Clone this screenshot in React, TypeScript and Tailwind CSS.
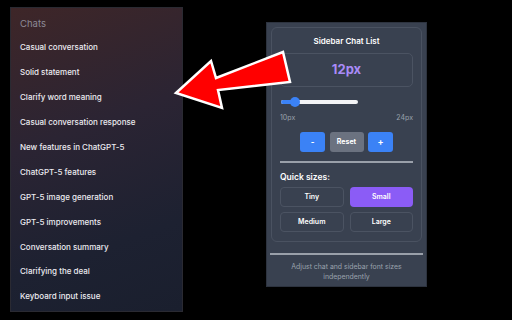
import React from "react";

const chats = [
  "Casual conversation",
  "Solid statement",
  "Clarify word meaning",
  "Casual conversation response",
  "New features in ChatGPT-5",
  "ChatGPT-5 features",
  "GPT-5 image generation",
  "GPT-5 improvements",
  "Conversation summary",
  "Clarifying the deal",
  "Keyboard input issue",
];

export default function App() {
  return (
    <div
      className="relative w-[512px] h-[320px] bg-black overflow-hidden flex items-start"
      style={{ fontFamily: "Inter, 'Liberation Sans', sans-serif" }}
    >
      {/* Sidebar */}
      <div className="ml-[10px] mt-[7px] w-[173px] h-[305px] bg-[linear-gradient(160deg,#3e2628_0%,#2b2433_40%,#1d2131_75%,#1a1f2e_100%)] border border-[#2a2a32] pl-[9px] pt-[6px]">
        <div className="h-[21px] flex items-center text-[9.5px] text-[#8d8a96]">Chats</div>
        {chats.map((c) => (
          <div key={c} className="h-[24.9px] flex items-center text-[8px] font-medium text-[#ecebf0]">
            {c}
          </div>
        ))}
      </div>

      {/* Popup */}
      <div className="ml-[83px] mt-[22px] w-[161px] h-[265px] bg-[#394150] border border-[#2d333f] flex flex-col">
        <div className="mx-[4px] mt-[4px] rounded-[6px] border border-[#4a5261] px-[8px] pt-[7px] pb-[9px] flex flex-col">
          <div className="h-[12px] flex items-center justify-center text-[8px] font-semibold text-white">
            Sidebar Chat List
          </div>
          <div className="mt-[6px] h-[34px] rounded-[5px] border border-[#4b5362] flex items-center justify-center text-[13px] font-bold text-[#a98bf7]">
            12px
          </div>
          <div className="mt-[10px] h-[10px] relative">
            <div className="absolute left-[1px] top-[3px] w-[77px] h-[4px] rounded-full bg-[#f3f4f6]" />
            <div className="absolute left-[1px] top-[3px] w-[14px] h-[4px] rounded-full bg-[#3b82f6]" />
            <div className="absolute left-[10px] top-0 w-[10px] h-[10px] rounded-full bg-[#3b82f6]" />
          </div>
          <div className="mt-[6px] h-[10px] flex items-center justify-between text-[7px] text-[#9aa1ad]">
            <span>10px</span>
            <span>24px</span>
          </div>
          <div className="mt-[9px] flex justify-center gap-[4.5px]">
            <div className="w-[25px] h-[20px] rounded-[3px] bg-[#3b82f6] flex items-center justify-center text-[8px] font-bold text-white">
              -
            </div>
            <div className="w-[34px] h-[20px] rounded-[3px] bg-[#6b7280] flex items-center justify-center text-[7px] font-bold text-white">
              Reset
            </div>
            <div className="w-[25px] h-[20px] rounded-[3px] bg-[#3b82f6] flex items-center justify-center text-[9px] font-bold text-white">
              +
            </div>
          </div>
          <div className="mt-[9px] h-[2px] bg-[#9aa0aa]" />
          <div className="mt-[8px] h-[12px] flex items-center text-[8.5px] font-semibold text-white">
            Quick sizes:
          </div>
          <div className="mt-[4px] grid grid-cols-2 gap-x-[6px] gap-y-[5px]">
            <div className="h-[20px] rounded-[4px] border border-[#4b5362] flex items-center justify-center text-[7px] font-semibold text-white">
              Tiny
            </div>
            <div className="h-[20px] rounded-[4px] bg-[#8b5cf6] flex items-center justify-center text-[7px] font-semibold text-white">
              Small
            </div>
            <div className="h-[20px] rounded-[4px] border border-[#4b5362] flex items-center justify-center text-[7px] font-semibold text-white">
              Medium
            </div>
            <div className="h-[20px] rounded-[4px] border border-[#4b5362] flex items-center justify-center text-[7px] font-semibold text-white">
              Large
            </div>
          </div>
        </div>
        <div className="mt-[11px] mx-[3px] h-[2px] bg-[#9aa0aa]" />
        <div className="mt-[7px] text-center text-[6.9px] leading-[9.5px] text-[#9aa1ad]">
          Adjust chat and sidebar font sizes
          <br />
          independently
        </div>
      </div>

      {/* Arrow */}
      <svg className="absolute left-0 top-0" width="512" height="320" viewBox="0 0 512 320">
        <polygon
          points="176,93 211,61 216,78 283,52 290,82 218,90 222,108"
          fill="#ff0000"
          stroke="#ffffff"
          strokeWidth="2.5"
          strokeLinejoin="miter"
        />
      </svg>
    </div>
  );
}
